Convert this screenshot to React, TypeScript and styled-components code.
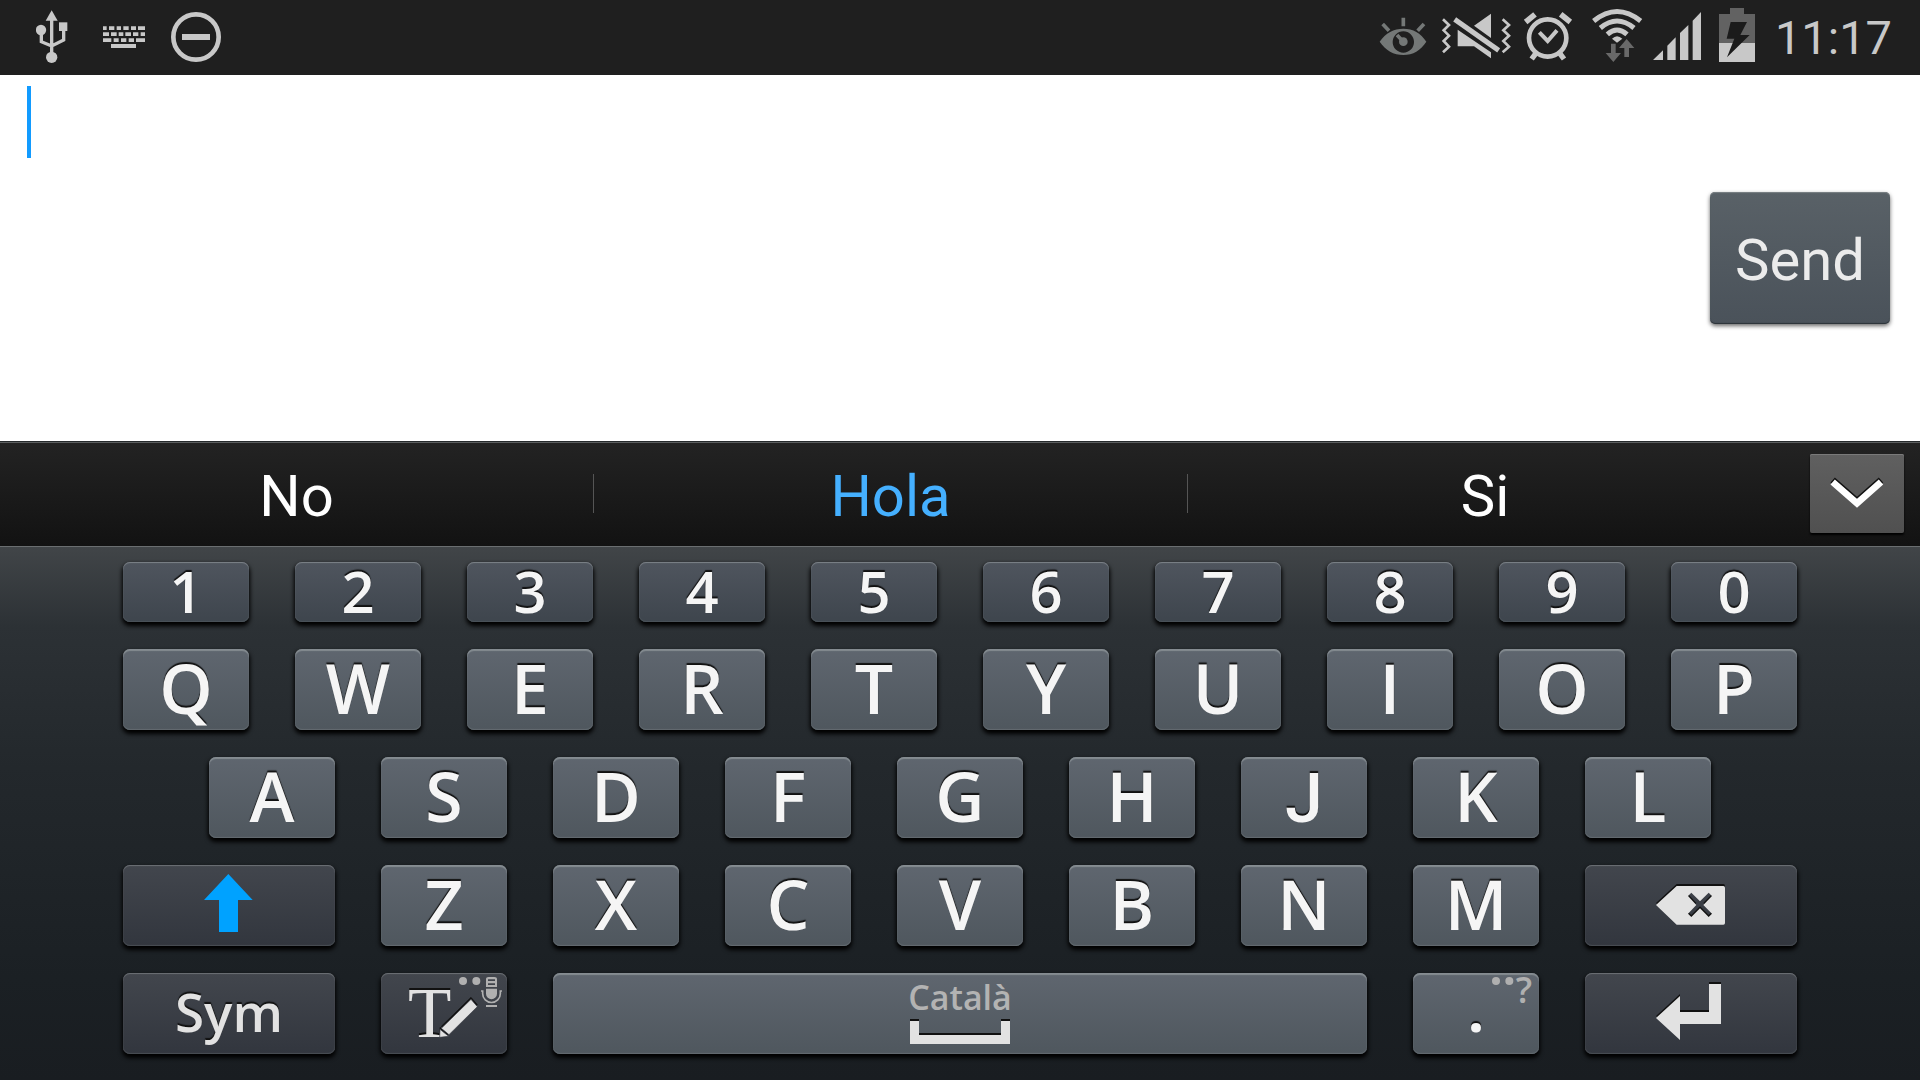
import React from 'react';
import styled, { createGlobalStyle, css } from 'styled-components';

const GlobalStyle = createGlobalStyle`
  *, *::before, *::after { box-sizing: border-box; }
  body { margin: 0; background: #fff; }
  button, textarea { font: inherit; margin: 0; padding: 0; border: 0; }
`;

const uiFont = `Roboto, "Noto Sans", sans-serif`;
const keyFont = `"Open Sans", "Noto Sans", sans-serif`;

const Screen = styled.div`
  min-height: 100vh;
  display: flex;
  flex-direction: column;
  font-family: ${uiFont};
`;

const StatusBar = styled.header`
  height: 75px;
  padding: 0 28px 0 36px;
  display: flex;
  align-items: center;
  justify-content: space-between;
  background: #1f1f1f;
  color: #c8c8c8;
`;

const StatusGroup = styled.div<{ $gap: number }>`
  display: flex;
  align-items: center;
  gap: ${p => p.$gap}px;
`;

const Clock = styled.time`
  padding-left: 8px;
  font-size: 47px;
  line-height: 72px;
`;

const Editor = styled.main`
  flex: 1;
  display: flex;
  gap: 16px;
  padding: 11px 30px 11px 27px;
  background: #fff;
`;

const Caret = styled.span`
  width: 4px;
  height: 72px;
  background: #129bff;
`;

const Message = styled.textarea`
  flex: 1;
  min-width: 0;
  background: transparent;
  color: #111;
  font-size: 58px;
  line-height: 72px;
  resize: none;
  outline: none;
`;

const SendButton = styled.button`
  align-self: center;
  width: 180px;
  height: 132px;
  padding-top: 4px;
  border-radius: 5px;
  background: linear-gradient(#596167, #4a525a);
  box-shadow: inset 0 1px 1px #7b8285, inset 0 -1px 1px #2c3238, 0 2px 4px rgba(0, 0, 0, 0.6);
  color: #ebebeb;
  font-size: 58px;
  line-height: 72px;
`;

const SuggestionBar = styled.div`
  height: 105px;
  padding: 0 16px 2px 0;
  display: flex;
  align-items: center;
  gap: 28px;
  border-top: 1px solid #262a2c;
  background: linear-gradient(#232323, #121212);
  box-shadow: inset 0 1px 0 #5c5f60;
`;

const Suggestions = styled.div`
  flex: 1;
  display: grid;
  grid-template-columns: repeat(3, 1fr);
  align-items: center;
`;

const Suggestion = styled.button<{ $active?: boolean }>`
  display: flex;
  align-items: center;
  background: none;
  color: ${p => (p.$active ? '#45b0ff' : '#fff')};
  font-size: 58px;
  line-height: 72px;

  span { flex: 1; padding-top: 6px; }

  &:not(:last-child)::after {
    content: '';
    width: 1px;
    height: 39px;
    background: #555;
  }
`;

const HideButton = styled.button`
  width: 94px;
  height: 79px;
  display: grid;
  place-items: center;
  border-radius: 2px;
  background: linear-gradient(#606060, #505050);
  box-shadow: inset 0 1px 0 #7a7a7a, 0 2px 2px #000;
`;

const Keyboard = styled.div`
  display: flex;
  flex-direction: column;
  gap: 27px;
  padding: 15px 123px 26px;
  border-top: 1px solid #6a6e70;
  background: linear-gradient(#414548 0, #2c3135 80px, #23282c 220px, #1b2024 430px, #191d21 100%);
  font-family: ${keyFont};
`;

const Row = styled.div<{ $inset?: number }>`
  display: flex;
  gap: 46px;
  padding: 0 ${p => p.$inset || 0}px;
`;

type Tone = 'digit' | 'letter' | 'action';

const tones = {
  digit: css`
    height: 60px;
    padding-top: 2px;
    background: linear-gradient(#4f555e, #3e454d);
    box-shadow: inset 0 1px 1px #7d8389, inset 0 -1px 1px #4b535a, 0 3px 4px 1px #000;
    color: #f5f5f5;
    font-size: 58px;
  `,
  letter: css`
    height: 81px;
    background: linear-gradient(#5f666f, #4f575e);
    box-shadow: inset 0 2px 1px #858c91, inset 0 -1px 1px #636b71, 0 3px 4px 1px #000;
    color: #f5f5f5;
    font-size: 68px;
  `,
  action: css`
    height: 81px;
    background: linear-gradient(#42464d, #32363e);
    box-shadow: inset 0 1px 1px #6d7176, inset 0 -1px 1px #494e54, 0 3px 4px 1px #000;
    color: #e2e2e2;
    font-size: 53px;
  `,
};

const Key = styled.button<{ $tone: Tone; $span?: number }>`
  position: relative;
  flex: ${p => p.$span || 126} 1 0;
  min-width: 0;
  display: flex;
  flex-direction: column;
  align-items: center;
  justify-content: center;
  border-radius: 7px;
  font-weight: 600;
  line-height: 60px;
  ${p => tones[p.$tone]}
`;

const SpaceKey = styled(Key)`
  justify-content: flex-end;
  padding-bottom: 10px;
`;

const Legend = styled.span`
  padding-bottom: 4px;
  text-shadow: 0 -2px 1px #111;
`;

/* A J that stands on the baseline, as the other capitals do. */
const BaselineLegend = styled(Legend)`
  padding: 2px 0 0;
  font-family: ${uiFont};
  font-weight: 500;
`;

const Stop = styled(Legend)`
  padding-bottom: 8px;
  font-size: 58px;
  font-weight: 700;
`;

const Language = styled.span`
  color: #b3b3b3;
  font-size: 34px;
  line-height: 48px;
`;

const SpaceMark = styled.span`
  width: 100px;
  height: 24px;
  border: 9px solid #e2e2e2;
  border-top: 0;
  filter: drop-shadow(0 -2px 0 #111);
`;

const Hint = styled.span`
  position: absolute;
  top: 4px;
  right: 5px;
  display: flex;
  color: #b0b0b0;
  font-size: 36px;
  line-height: 26px;
`;

const TextHint = styled(Hint)`
  right: 7px;
  gap: 2px;
`;

const Glyph = styled.svg<{ $raised?: boolean }>`
  display: block;
  flex: none;
  fill: currentColor;
  ${p => p.$raised && css`filter: drop-shadow(0 -2px 0 #111);`}
`;

/* Icon artwork is drawn on a grid of three units to the pixel. */
type IconProps = { box: [number, number, number, number]; raised?: boolean; children: React.ReactNode };
const Icon = ({ box, raised, children }: IconProps) => (
  <Glyph viewBox={box.join(' ')} width={box[2] / 3} height={box[3] / 3} $raised={raised} aria-hidden="true">
    {children}
  </Glyph>
);

const UsbIcon = () => (
  <Icon box={[108, 0, 123, 225]}>
    <path d="M155 31 173 62H137Z" />
    <circle cx="123" cy="90" r="15.500" />
    <rect x="177" y="67" width="25" height="26" />
    <circle cx="155" cy="172" r="17" />
    <path d="M155 55V165M124 95V125L155 138 191 120V90" fill="none" stroke="currentColor" strokeWidth="10" />
  </Icon>
);

const KeyboardIcon = () => (
  <Icon box={[309, 0, 126, 225]}>
    <path d="M309 79h11v11h-11zM327 79h16v11h-16zM350 79h13v11h-13zM370 79h16v11h-16zM393 79h15v11h-15zM414 79h21v11h-21zM309 97h18v11h-18zM333 97h17v11h-17zM356 97h14v11h-14zM376 97h17v11h-17zM399 97h16v11h-16zM422 97h13v11h-13zM309 115h25v11h-25zM341 115h15v11h-15zM363 115h16v11h-16zM386 115h16v11h-16zM408 115h27v11h-27zM333 132h75v12h-75z" />
  </Icon>
);

const BlockIcon = () => (
  <Icon box={[513, 0, 150, 225]}>
    <circle cx="588" cy="111" r="68" fill="none" stroke="currentColor" strokeWidth="14" />
    <rect x="546" y="102" width="84" height="18" />
  </Icon>
);

const EyeIcon = () => (
  <Icon box={[48, 0, 156, 225]}>
    <g fill="#747877" stroke="#747877">
      <path fillRule="evenodd" stroke="none" d="M56 125C74 99 98 86 127 86s52 13 69 39c-17 26-40 40-69 40s-53-14-71-40ZM127 94a32 32 0 1 0 0 64 32 32 0 0 0 0-64Z" />
      <circle cx="127" cy="125" r="13" stroke="none" />
      <path d="M127 125 108 105M65 72 84 92M127 53V79M189 72 170 92" strokeWidth="11" fill="none" />
    </g>
  </Icon>
);

const MuteIcon = () => (
  <Icon box={[228, 0, 231, 225]}>
    <path d="M339 77 390 41V114ZM290 89 390 157V175L339 139H290Z" />
    <path d="M283 59 411 151" stroke="#1f1f1f" strokeWidth="28" />
    <path d="M281 58 413 151" stroke="currentColor" strokeWidth="15" />
    <path d="M246 58 264 75 248 91 264 107 248 123 264 140 246 157M425 58 444 75 427 91 444 107 427 123 444 140 425 157" fill="none" stroke="currentColor" strokeWidth="8" />
  </Icon>
);

const AlarmIcon = () => (
  <Icon box={[483, 0, 162, 225]}>
    <g fill="none" stroke="currentColor">
      <circle cx="560" cy="114" r="56" strokeWidth="14" />
      <path d="M535 97 560 123 588 91" strokeWidth="12" />
      <path d="M494 66 522 43M599 43 628 66" strokeWidth="17" />
      <path d="M524 161 512 177M597 161 609 177" strokeWidth="16" />
    </g>
  </Icon>
);

const WifiIcon = () => (
  <Icon box={[669, 0, 180, 225]}>
    <g fill="none" stroke="currentColor" strokeWidth="15">
      <path d="M698 63Q768 6 839 63" />
      <path d="M718 84Q768 42 819 84" />
      <path d="M739 103Q768 77 798 103" />
    </g>
    <path d="M753 116Q768 101 784 116L768 128Z" />
    <path fill="#696969" d="M750 131h14v28h16l-23 27-23-27h16zM797 117l23 27h-16v27h-14v-27h-16z" />
  </Icon>
);

const SignalIcon = () => (
  <Icon box={[93, 0, 165, 225]}>
    <path d="M96 180 126 151V180ZM139 180V137L164 112V180ZM177 180V99L202 75V180ZM215 180V62L240 36V180Z" />
  </Icon>
);

const BatteryIcon = () => (
  <Icon box={[282, 0, 132, 225]}>
    <path fill="#626262" d="M327 24h42v18h33v88H294V42h33z" />
    <path d="M294 129h108v57H294z" />
    <path fill="#1b1b1b" d="M329 66h49l-20 39h28L318 172l22-56h-23z" />
  </Icon>
);

const ChevronIcon = () => (
  <Icon box={[390, 145, 162, 93]} raised>
    <path fill="none" stroke="#fff" strokeWidth="20" d="M398 157 471 221 543 157" />
  </Icon>
);

const ShiftIcon = () => (
  <Icon box={[312, 402, 150, 189]}>
    <path fill="#00a2ff" d="M385 402 458 480H414V576H357V480H312Z" />
  </Icon>
);

const BackspaceIcon = () => (
  <Icon box={[888, 132, 213, 129]} raised>
    <path fillRule="evenodd" d="M888 195 950 138H1090Q1095 138 1095 143V249Q1095 254 1090 254H950ZM994 158 984 168 1009 195 984 221 994 231 1020 205 1046 231 1056 221 1030 195 1056 168 1046 158 1020 184Z" />
  </Icon>
);

const EnterIcon = () => (
  <Icon box={[888, 426, 213, 189]} raised>
    <path d="M1047 432H1083V552H960V600L888 534 960 468V516H1047Z" />
  </Icon>
);

const HandwritingIcon = () => (
  <Icon box={[111, 36, 222, 249]} raised>
    <text x="179" y="230" textAnchor="middle" fontFamily="Liberation Serif, serif" fontSize="213" fontWeight="400">T</text>
    <path d="M303 118 322 140 237 224 214 205Z" stroke="#363a42" strokeWidth="2" />
    <path d="M210 208 236 229 209 232Z" stroke="#363a42" strokeWidth="2" />
  </Icon>
);

const Dots = () => (
  <Icon box={[0, 0, 66, 36]}>
    <circle cx="12" cy="12" r="12" />
    <circle cx="52" cy="12" r="12" />
  </Icon>
);

const MicIcon = () => (
  <Icon box={[333, 51, 63, 90]}>
    <path fillRule="evenodd" d="M348 81V58Q348 51 356 51H373Q381 51 381 58V81ZM354 58H375V63H354ZM354 70H375V75H354Z" />
    <path d="M348 86H381V101A16 16 0 0 1 348 101Z" />
    <path d="M333 93H338V101A26 26 0 0 0 391 101V93H396" fill="none" stroke="currentColor" strokeWidth="5" />
    <path d="M348 135h33v6h-33z" />
  </Icon>
);

const Letters = ({ keys, tone = 'letter' }: { keys: string; tone?: Tone }) => (
  <>
    {keys.split('').map(k => (
      <Key key={k} type="button" $tone={tone}>
        {k === 'J' ? <BaselineLegend>{k}</BaselineLegend> : <Legend>{k}</Legend>}
      </Key>
    ))}
  </>
);

export default function App() {
  return (
    <>
      <GlobalStyle />
      <Screen>
        <StatusBar>
          <StatusGroup $gap={26}>
            <UsbIcon />
            <KeyboardIcon />
            <BlockIcon />
          </StatusGroup>
          <StatusGroup $gap={8}>
            <EyeIcon />
            <MuteIcon />
            <AlarmIcon />
            <WifiIcon />
            <SignalIcon />
            <BatteryIcon />
            <Clock>11:17</Clock>
          </StatusGroup>
        </StatusBar>

        <Editor>
          <Caret />
          <Message aria-label="Message" />
          <SendButton type="button">Send</SendButton>
        </Editor>

        <SuggestionBar>
          <Suggestions>
            <Suggestion type="button"><span>No</span></Suggestion>
            <Suggestion type="button" $active><span>Hola</span></Suggestion>
            <Suggestion type="button"><span>Si</span></Suggestion>
          </Suggestions>
          <HideButton type="button" aria-label="Hide suggestions">
            <ChevronIcon />
          </HideButton>
        </SuggestionBar>

        <Keyboard>
          <Row><Letters keys="1234567890" tone="digit" /></Row>
          <Row><Letters keys="QWERTYUIOP" /></Row>
          <Row $inset={86}><Letters keys="ASDFGHJKL" /></Row>
          <Row>
            <Key type="button" $tone="action" $span={212} aria-label="Shift"><ShiftIcon /></Key>
            <Letters keys="ZXCVBNM" />
            <Key type="button" $tone="action" $span={212} aria-label="Backspace"><BackspaceIcon /></Key>
          </Row>
          <Row>
            <Key type="button" $tone="action" $span={212}><Legend>Sym</Legend></Key>
            <Key type="button" $tone="action" aria-label="Handwriting">
              <HandwritingIcon />
              <Hint><Dots /><MicIcon /></Hint>
            </Key>
            <SpaceKey type="button" $tone="letter" $span={814}>
              <Language>Català</Language>
              <SpaceMark />
            </SpaceKey>
            <Key type="button" $tone="letter">
              <Stop>.</Stop>
              <TextHint><Dots />?</TextHint>
            </Key>
            <Key type="button" $tone="action" $span={212} aria-label="Enter"><EnterIcon /></Key>
          </Row>
        </Keyboard>
      </Screen>
    </>
  );
}
